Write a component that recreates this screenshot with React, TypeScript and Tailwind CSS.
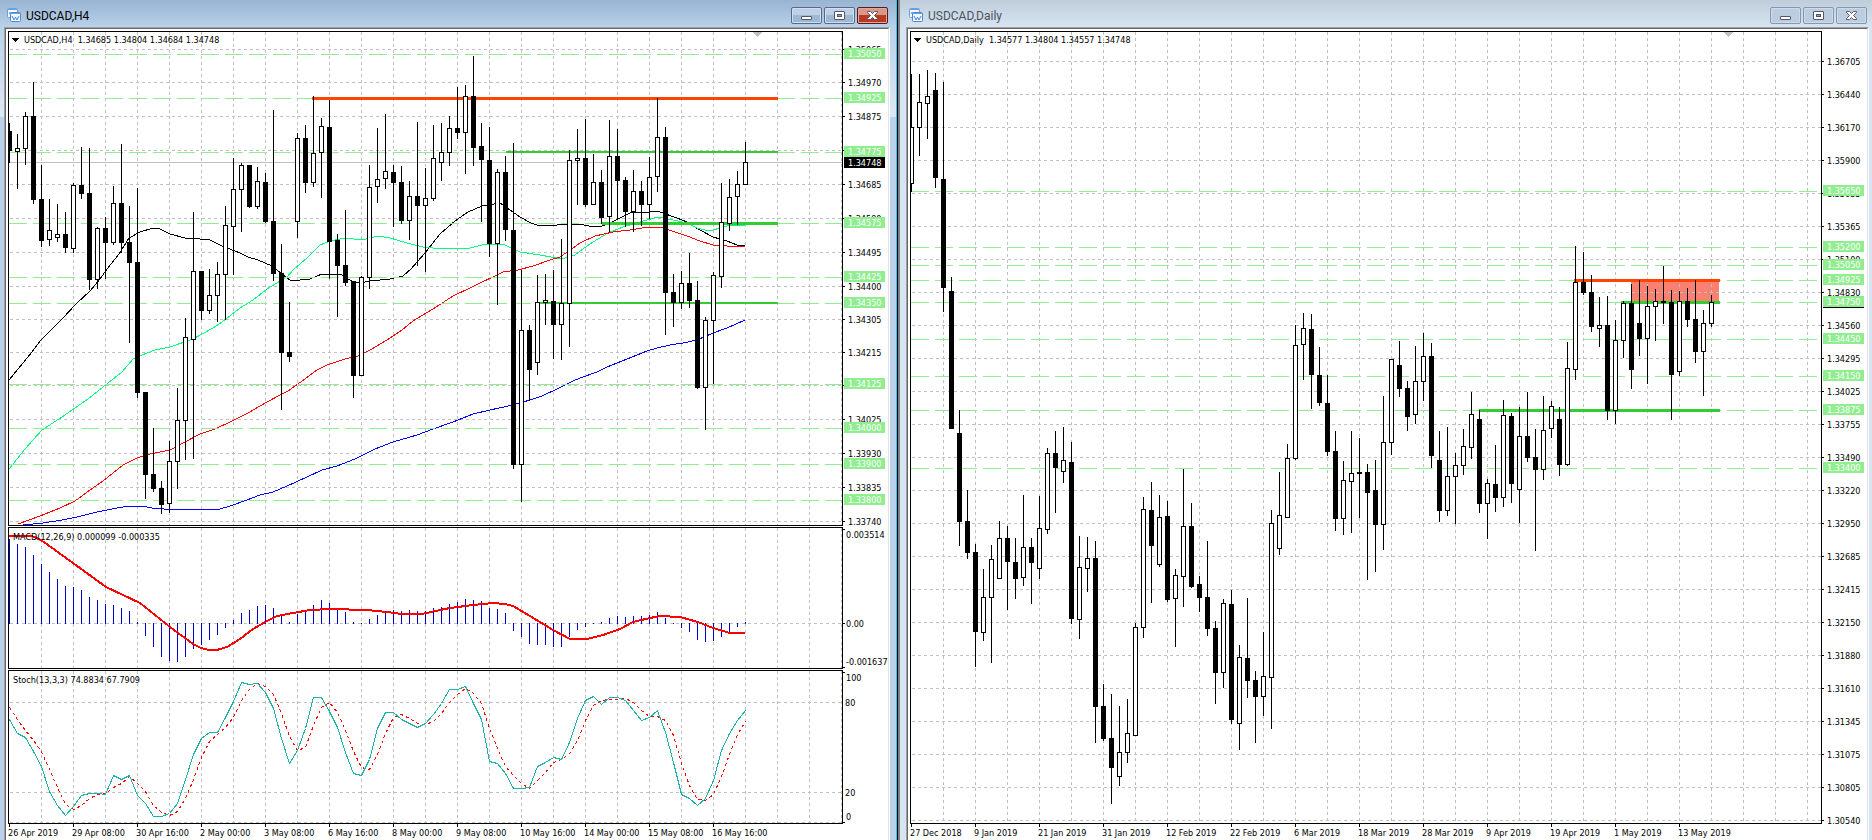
import React from 'react';
import clsx from 'clsx';

// [high, bodyTop, bodyBottom, low, filled]
type Candle = [number, number, number, number, 0 | 1];
type Level = [string, number];

interface TrendLine {
  from: number;
  to: number;
  y: number;
  width: number;
  color: string;
}

const STEP = 8;
const FAR = 4000;
const GRID = '#c0c0c0';
const LEVEL = '#90ee90';
const LIME = '#32cd32';
const FONT = "[font-family:'DejaVu_Sans_Condensed','Noto_Sans',sans-serif]";

const h4Candles: Candle[] = [
  [123, 131, 151, 163, 1], [134, 148, 152, 189, 0], [112, 116, 149, 165, 0], [82, 116, 200, 204, 1],
  [165, 199, 241, 247, 1], [199, 230, 240, 246, 0], [204, 234, 238, 242, 0], [212, 234, 248, 253, 1],
  [183, 185, 249, 253, 0], [147, 185, 194, 199, 1], [148, 193, 280, 290, 1], [227, 228, 280, 289, 0],
  [217, 228, 243, 279, 1], [186, 203, 243, 245, 0], [144, 203, 243, 253, 1], [206, 242, 263, 343, 1],
  [188, 262, 393, 398, 1], [392, 392, 475, 499, 1], [428, 474, 489, 492, 1], [481, 488, 505, 514, 1],
  [441, 461, 504, 513, 0], [388, 420, 462, 489, 0], [318, 337, 421, 460, 0], [212, 271, 340, 459, 0],
  [271, 271, 311, 320, 1], [269, 295, 311, 314, 0], [262, 274, 296, 322, 0], [206, 225, 275, 320, 0],
  [158, 189, 227, 275, 0], [163, 165, 190, 232, 0], [165, 165, 207, 208, 1], [167, 181, 207, 209, 0],
  [173, 182, 222, 223, 1], [110, 221, 274, 281, 1], [244, 273, 353, 410, 1], [302, 352, 357, 362, 1],
  [133, 138, 222, 238, 0], [125, 138, 183, 193, 1], [96, 153, 183, 187, 0], [118, 126, 153, 198, 0],
  [100, 127, 242, 279, 1], [234, 240, 266, 317, 1], [210, 265, 283, 286, 1], [281, 281, 376, 398, 1],
  [276, 277, 376, 376, 0], [165, 187, 278, 289, 0], [128, 179, 187, 203, 0], [114, 171, 179, 189, 0],
  [165, 172, 183, 227, 1], [166, 182, 221, 224, 1], [181, 196, 221, 240, 0], [122, 196, 206, 266, 1],
  [168, 198, 206, 272, 0], [125, 158, 199, 201, 0], [123, 152, 163, 181, 0], [116, 128, 153, 166, 0],
  [87, 128, 133, 139, 1], [85, 96, 133, 174, 0], [56, 96, 148, 166, 1], [123, 146, 160, 222, 1],
  [127, 160, 244, 257, 1], [169, 172, 244, 305, 0], [156, 172, 230, 241, 1], [143, 230, 465, 469, 1],
  [270, 330, 465, 502, 0], [325, 330, 370, 401, 1], [275, 302, 363, 375, 0], [274, 300, 303, 325, 0],
  [270, 301, 325, 359, 1], [239, 303, 325, 360, 0], [150, 160, 304, 347, 0], [129, 158, 161, 205, 0],
  [119, 158, 205, 207, 1], [154, 182, 205, 205, 0], [170, 182, 218, 224, 1], [120, 156, 217, 232, 0],
  [129, 156, 181, 220, 1], [177, 180, 212, 227, 1], [170, 191, 212, 232, 0], [181, 191, 205, 226, 1],
  [157, 177, 205, 219, 0], [98, 137, 177, 192, 0], [127, 137, 293, 335, 1], [274, 292, 303, 327, 1],
  [271, 283, 303, 309, 0], [253, 283, 301, 308, 1], [281, 300, 388, 389, 1], [317, 320, 388, 430, 0],
  [272, 275, 321, 384, 0], [183, 222, 277, 288, 0], [179, 197, 224, 231, 0], [171, 184, 197, 225, 0],
  [142, 162, 185, 185, 0],
];

const dailyCandles: Candle[] = [
  [74, 127, 184, 192, 0], [74, 102, 128, 156, 0], [70, 96, 104, 139, 0], [73, 90, 178, 188, 1],
  [82, 179, 288, 312, 1], [277, 291, 429, 429, 1], [410, 433, 522, 546, 1], [490, 521, 553, 559, 1],
  [544, 552, 632, 667, 1], [569, 597, 633, 641, 0], [545, 559, 598, 663, 0], [521, 538, 579, 579, 0],
  [526, 538, 562, 610, 1], [538, 562, 579, 599, 1], [495, 547, 578, 586, 0], [538, 547, 563, 604, 1],
  [496, 528, 569, 579, 0], [448, 453, 530, 534, 0], [431, 453, 468, 513, 1], [427, 460, 472, 483, 0],
  [442, 462, 619, 624, 1], [536, 567, 620, 639, 0], [537, 558, 569, 592, 0], [541, 558, 707, 743, 1],
  [684, 706, 739, 741, 1], [694, 738, 768, 804, 1], [706, 752, 777, 786, 0], [699, 733, 753, 763, 0],
  [623, 627, 736, 736, 0], [497, 509, 628, 638, 0], [482, 510, 546, 603, 1], [495, 517, 565, 567, 0],
  [501, 516, 600, 602, 1], [569, 575, 599, 647, 0], [469, 526, 577, 607, 0], [503, 526, 587, 588, 1],
  [576, 584, 598, 612, 1], [541, 597, 629, 636, 1], [621, 628, 673, 704, 1], [599, 603, 673, 688, 0],
  [590, 604, 720, 724, 1], [645, 657, 724, 750, 0], [598, 658, 681, 698, 1], [671, 680, 697, 743, 1],
  [632, 676, 697, 716, 0], [510, 523, 678, 729, 0], [472, 515, 549, 555, 0], [444, 458, 518, 518, 0],
  [325, 345, 459, 460, 0], [313, 328, 345, 380, 0], [314, 329, 375, 409, 1], [347, 375, 403, 406, 1],
  [375, 403, 452, 456, 1], [431, 451, 519, 531, 1], [461, 480, 519, 535, 0], [431, 473, 482, 533, 0],
  [438, 472, 474, 518, 1], [464, 472, 493, 580, 1], [460, 490, 525, 572, 1], [396, 442, 525, 550, 0],
  [359, 359, 443, 455, 0], [341, 365, 389, 397, 1], [381, 388, 417, 431, 1], [346, 381, 415, 424, 0],
  [333, 356, 382, 401, 0], [343, 356, 456, 468, 1], [431, 460, 511, 522, 1], [427, 476, 511, 516, 0],
  [453, 465, 477, 524, 0], [429, 446, 466, 475, 0], [392, 414, 448, 459, 0], [410, 419, 504, 513, 1],
  [479, 483, 504, 539, 0], [445, 484, 498, 512, 1], [400, 415, 498, 507, 0], [413, 416, 484, 503, 1],
  [407, 436, 490, 523, 0], [392, 436, 458, 462, 1], [429, 457, 470, 551, 1], [396, 430, 470, 480, 0],
  [401, 406, 429, 438, 0], [407, 419, 465, 476, 1], [342, 368, 465, 466, 0], [246, 282, 370, 380, 0],
  [252, 282, 293, 295, 1], [275, 292, 327, 332, 1], [297, 325, 329, 347, 0], [296, 325, 411, 420, 1],
  [320, 340, 411, 424, 0], [301, 303, 341, 358, 0], [284, 303, 370, 389, 1], [280, 323, 339, 356, 1],
  [286, 306, 339, 384, 0], [289, 301, 307, 341, 0], [266, 301, 303, 324, 1], [290, 302, 375, 420, 1],
  [291, 301, 372, 376, 0], [288, 301, 320, 327, 1], [280, 319, 352, 363, 1], [310, 323, 352, 396, 0],
  [295, 302, 324, 327, 0],
];

const averages = [
  {
    color: '#000000',
    points:
      '9,380 32,352 41,340 62,319 77,303 90,291 100,279 107,269 119,254 129,238 140,232 153,228 160,229 170,234 185,238 200,239 210,240 222,246 240,253 248,257 258,260 272,266 283,275 290,280 300,280 310,279 322,274 342,275 353,282 360,283 370,281 390,279 403,276 411,269 425,253 440,234 455,221 468,212 482,206 500,203 510,210 520,217 531,223 537,225 557,225 573,224 580,224 593,227 602,226 612,222 630,213 650,212 657,211 677,218 687,222 698,229 713,237 727,241 737,245 745,245',
  },
  {
    color: '#00ff7f',
    points:
      '9,469 25,449 42,430 62,417 88,399 103,387 122,372 133,359 142,355 155,350 170,347 193,339 213,328 222,322 240,308 253,300 267,289 287,277 294,269 307,258 320,245 330,241 345,238 362,240 378,236 390,238 407,243 423,247 442,249 470,248 482,245 503,244 520,252 540,255 562,259 575,255 580,251 593,242 608,233 623,227 643,221 658,217 673,220 687,223 697,228 705,230 713,230 727,226 745,225',
  },
  {
    color: '#ff0000',
    points:
      '18,524 40,516 60,508 75,501 90,490 103,481 123,465 137,458 150,454 170,450 185,442 200,434 215,429 230,422 248,413 267,402 280,395 288,391 305,379 317,370 327,365 345,359 358,356 370,350 387,340 402,330 413,321 433,309 453,296 472,287 503,272 518,270 533,266 550,260 560,257 573,248 580,243 595,236 613,232 630,230 648,227 660,227 672,231 687,236 700,241 713,245 727,246 745,247',
  },
  {
    color: '#0000ff',
    points:
      '23,525 43,523 62,520 77,517 97,512 117,508 130,506 142,506 152,508 175,510 200,509 220,509 230,506 247,500 260,495 273,492 287,486 307,477 322,470 337,466 355,459 375,449 393,442 417,435 433,429 453,422 473,414 490,410 513,405 530,400 542,396 557,389 573,381 580,378 597,372 607,367 627,359 647,351 657,348 670,345 683,343 697,340 713,333 727,328 745,320',
  },
];

const macdBars = [
  539, 544, 547, 555, 564, 572, 579, 586, 587, 590, 597, 600, 604, 605, 608, 611, 622, 635, 646, 656,
  660, 661, 656, 648, 644, 639, 634, 627, 620, 613, 610, 606, 605, 608, 615, 622, 614, 611, 605, 600,
  603, 609, 612, 622, 623, 619, 615, 613, 610, 611, 610, 611, 611, 608, 607, 604, 602, 599, 600, 601,
  608, 609, 613, 630, 636, 643, 644, 644, 646, 646, 636, 629, 626, 623, 622, 618, 616, 617, 616, 616,
  615, 612, 618, 623, 627, 631, 639, 641, 640, 636, 632, 626, 622,
];

const macdSignal =
  '9,536 32,536 41,540 73,563 106,587 140,603 170,627 193,644 201,648 209,650 217,650 227,647 240,639 253,629 267,621 277,616 293,613 310,610 330,609 367,610 387,612 402,614 422,614 440,610 450,608 473,605 493,603 505,604 513,606 530,616 553,630 570,639 587,639 603,635 620,629 633,622 650,618 660,616 680,617 698,622 713,628 730,633 745,633';

const stochMain = [
  719, 733, 737, 751, 766, 791, 805, 815, 806, 795, 793, 793, 794, 775, 779, 775, 795, 803, 816, 816,
  813, 803, 779, 754, 738, 732, 732, 717, 701, 682, 684, 683, 692, 708, 738, 763, 750, 728, 697, 697,
  711, 727, 752, 773, 775, 759, 728, 712, 712, 719, 723, 727, 723, 714, 703, 689, 689, 686, 703, 719,
  761, 763, 773, 788, 788, 787, 766, 762, 757, 759, 742, 718, 700, 696, 704, 697, 697, 700, 710, 720,
  717, 710, 732, 762, 794, 798, 805, 798, 780, 750, 733, 720, 710,
];

// %D is a 3-period average of %K
const stochSignal = stochMain.map((v, i) => {
  const prev = stochMain[i - 1] ?? 705;
  const prev2 = stochMain[i - 2] ?? (i === 1 ? 705 : 697);
  return Math.round((v + prev + prev2) / 3);
});

const h4Scale: Level[] = [
  ['1.35065', 49], ['1.34970', 82], ['1.34875', 116], ['1.34780', 150], ['1.34685', 184],
  ['1.34590', 218], ['1.34495', 252], ['1.34400', 286], ['1.34305', 319], ['1.34215', 352],
  ['1.34120', 385], ['1.34025', 419], ['1.33930', 453], ['1.33835', 487], ['1.33740', 521],
];

const h4Levels: Level[] = [
  ['1.35050', 54], ['1.34925', 98], ['1.34775', 152], ['1.34575', 223], ['1.34425', 277],
  ['1.34350', 303], ['1.34125', 384], ['1.34000', 428], ['1.33900', 464], ['1.33800', 500],
];

const dailyScale: Level[] = [
  '1.36705', '1.36440', '1.36170', '1.35900', '1.35635', '1.35365', '1.35100', '1.34830',
  '1.34560', '1.34295', '1.34025', '1.33755', '1.33490', '1.33220', '1.32950', '1.32685',
  '1.32415', '1.32150', '1.31880', '1.31610', '1.31345', '1.31075', '1.30805', '1.30540',
].map((label, i): Level => [label, 61 + i * 33]);

const dailyLevels: Level[] = [
  ['1.35650', 191], ['1.35200', 247], ['1.35050', 265], ['1.34925', 280], ['1.34750', 302],
  ['1.34450', 339], ['1.34150', 376], ['1.33875', 410], ['1.33400', 468],
];

const h4Lines: TrendLine[] = [
  { from: 312, to: 778, y: 97, width: 3, color: '#ff4500' },
  { from: 506, to: 778, y: 151, width: 2, color: LIME },
  { from: 602, to: 778, y: 222, width: 3, color: LIME },
  { from: 538, to: 778, y: 302, width: 2, color: LIME },
];

const dailyLines: TrendLine[] = [
  { from: 1574, to: 1720, y: 279, width: 3, color: '#ff4500' },
  { from: 1621, to: 1720, y: 301, width: 3, color: LIME },
  { from: 1479, to: 1720, y: 409, width: 3, color: LIME },
];

const h4Dates = [
  '26 Apr 2019', '29 Apr 08:00', '30 Apr 16:00', '2 May 00:00', '3 May 08:00', '6 May 16:00',
  '8 May 00:00', '9 May 08:00', '10 May 16:00', '14 May 00:00', '15 May 08:00', '16 May 16:00',
];

const dailyDates = [
  '27 Dec 2018', '9 Jan 2019', '21 Jan 2019', '31 Jan 2019', '12 Feb 2019', '22 Feb 2019',
  '6 Mar 2019', '18 Mar 2019', '28 Mar 2019', '9 Apr 2019', '19 Apr 2019', '1 May 2019', '13 May 2019',
];

const toPoints = (values: number[], left: number) =>
  values.map((y, i) => `${left + i * STEP + 0.5},${y + 0.5}`).join(' ');

const Grid: React.FC<{ left: number; top: number; rows: number[] }> = ({ left, top, rows }) => (
  <g stroke={GRID} strokeDasharray="3 3">
    {Array.from({ length: 40 }, (_, i) => left + 32 + i * 32).map((x) => (
      <line key={x} x1={x + 0.5} x2={x + 0.5} y1={top} y2={FAR} />
    ))}
    {rows.map((y) => (
      <line key={y} x1={left + 1} x2={FAR} y1={y + 0.5} y2={y + 0.5} />
    ))}
  </g>
);

const Levels: React.FC<{ left: number; levels: Level[] }> = ({ left, levels }) => (
  <g stroke={LEVEL} strokeDasharray="18 6">
    {levels.map(([label, y]) => (
      <line key={label} x1={left} x2={FAR} y1={y + 0.5} y2={y + 0.5} />
    ))}
  </g>
);

const Candles: React.FC<{ left: number; data: Candle[] }> = ({ left, data }) => (
  <g>
    {data.map(([high, top, bottom, low, filled], i) => {
      const x = left + i * STEP;
      return (
        <g key={x}>
          <rect x={x} y={high} width={1} height={low - high} />
          <rect x={x - 2} y={top} width={5} height={bottom - top} />
          {!filled && <rect x={x - 1} y={top + 1} width={3} height={bottom - top - 2} fill="#fff" />}
        </g>
      );
    })}
  </g>
);

const TrendLines: React.FC<{ lines: TrendLine[] }> = ({ lines }) => (
  <g>
    {lines.map((l) => (
      <rect key={l.y} x={l.from} y={l.y} width={l.to - l.from} height={l.width} fill={l.color} />
    ))}
  </g>
);

const Header: React.FC<{ x: number; text: string; marker: number }> = ({ x, text, marker }) => (
  <g>
    <path d={`M${x} 38h7l-3 4h-1z`} />
    <text x={x + 12} y={43} className="whitespace-pre">{text}</text>
    <path d={`M${marker} 32h9l-4 5h-1z`} fill={GRID} />
  </g>
);

interface PaneProps {
  className: string;
  left: number;
  top: number;
  label: string;
  axis: React.ReactNode;
  children: React.ReactNode;
}

// A framed plot with its value axis on the right
const Pane: React.FC<PaneProps> = ({ className, left, top, label, axis, children }) => (
  <div className={clsx('flex', className)}>
    <div className="flex min-w-0 flex-1 border border-black">
      <svg role="img" aria-label={label} className="min-w-0 flex-1" shapeRendering="crispEdges">
        <g transform={`translate(${-left} ${-top - 1})`}>{children}</g>
      </svg>
    </div>
    <svg className="w-[45px] shrink-0 overflow-visible" shapeRendering="crispEdges">
      <g transform={`translate(0 ${-top})`}>{axis}</g>
    </svg>
  </div>
);

const PriceAxis: React.FC<{ scale: Level[]; levels: Level[]; bid: number }> = ({ scale, levels, bid }) => (
  <g>
    {scale.map(([label, y]) => (
      <g key={label}>
        <rect x={0} y={y} width={2} height={1} />
        <text x={5} y={y + 4}>{label}</text>
      </g>
    ))}
    <rect x={1} y={bid - 5} width={41} height={11} />
    <text x={5} y={bid + 4} fill="#fff">1.34748</text>
    {levels.map(([label, y]) => (
      <g key={label}>
        <rect x={1} y={y - 6} width={41} height={11} fill={LEVEL} />
        <text x={5} y={y + 3} fill="#fff">{label}</text>
      </g>
    ))}
  </g>
);

const TimeAxis: React.FC<{ dates: string[] }> = ({ dates }) => (
  <svg className="h-4 w-full shrink-0" shapeRendering="crispEdges">
    {dates.map((date, i) => (
      <g key={date}>
        <rect x={1 + i * 64} y={0} width={1} height={3} />
        <text x={i * 64} y={12}>{date}</text>
      </g>
    ))}
  </svg>
);

const ChartIcon: React.FC = () => (
  <svg width="15" height="15" viewBox="0 0 15 15" className="shrink-0" aria-hidden="true">
    <rect x="0.5" y="0.5" width="10" height="9" rx="1" fill="#f4f9ff" stroke="#6aa0e0" />
    <rect x="1" y="1" width="9" height="1" fill="#6aa0e0" />
    <path d="M2 6l1-2 1 2 1-2" fill="none" stroke="#6aa0e0" />
    <rect x="3.5" y="4.5" width="10" height="9" rx="1" fill="#f4f9ff" stroke="#4a86d8" />
    <rect x="4" y="5" width="9" height="1" fill="#6aa0e0" />
    <path d="M5 8l2 4 1.500-3 1.500 3 2-4" fill="none" stroke="#4a86d8" />
  </svg>
);

const glyphs = {
  Minimize: <rect x="10.5" y="9.500" width="10" height="3" rx="0.500" />,
  Maximize: (
    <>
      <rect x="10.5" y="4.500" width="10" height="8" rx="0.500" />
      <rect x="13.5" y="7.500" width="4" height="2" fill="#8ea6c4" />
    </>
  ),
  Close: <path d="M10.500 4.500h3l2 2 2-2h3v1l-3 3 3 3v1h-3l-2-2-2 2h-3v-1l3-3-3-3z" />,
};

const WindowButton: React.FC<{ kind: keyof typeof glyphs; active: boolean }> = ({ kind, active }) => (
  <button
    type="button"
    aria-label={kind}
    className={clsx(
      'h-[17px] w-[31px] rounded-[2px] border',
      !active && 'border-[#8795b3] bg-[#bdcde0] shadow-[inset_0_0_0_1px_#cddbea]',
      active && kind !== 'Close' &&
        'border-[#566b8c] bg-linear-to-b from-[#bdd0e6] from-50% to-[#9db7d5] to-50% shadow-[inset_0_0_0_1px_#d0dff0]',
      active && kind === 'Close' &&
        'border-[#5a1a1a] bg-linear-to-b from-[#d9968a] from-50% to-[#b93a22] to-50% shadow-[inset_0_0_0_1px_#e0a89c]'
    )}
  >
    <svg width="29" height="15" viewBox="1 1 29 15" fill="#fff" stroke="#535666">
      {glyphs[kind]}
    </svg>
  </button>
);

interface ChartWindowProps {
  title: string;
  active: boolean;
  children: React.ReactNode;
}

const ChartWindow: React.FC<ChartWindowProps> = ({ title, active, children }) => (
  <section
    className={clsx(
      'flex min-w-0',
      active
        ? 'border-r border-black bg-[#b9d1ea]'
        : 'border-l-2 border-[#7f7f7f] bg-[#d7e4f2]'
    )}
  >
    <div
      className={clsx(
        'flex min-w-0 flex-1 flex-col',
        active
          ? 'border-r border-[#33c3ee] bg-[linear-gradient(#99b4d1_0px,#b9d1ea_27px,#dce8f5_117px,#b9d1ea_117px)] pr-1.5 pl-1'
          : 'bg-[linear-gradient(#bfcddb_0px,#d7e4f2_27px)] pr-[3px] pl-1.5'
      )}
    >
      <header className="flex h-[27px] shrink-0 items-center gap-1 pr-0.5 pl-[3px]">
        <span className="pt-1">
          <ChartIcon />
        </span>
        <h1
          className={clsx(
            'flex-1 pt-1 text-xs [font-family:Roboto,sans-serif]',
            active ? 'text-black' : 'text-[#4c535c]'
          )}
        >
          {title}
        </h1>
        <div className="flex gap-0.5 pt-1">
          <WindowButton kind="Minimize" active={active} />
          <WindowButton kind="Maximize" active={active} />
          <WindowButton kind="Close" active={active} />
        </div>
      </header>
      <div className="flex flex-1 flex-col border-t border-r border-l border-t-[#a0a0a0] border-r-white border-l-[#a0a0a0]">
        <div
          className={clsx(
            'flex flex-1 flex-col gap-px border-t border-r border-l border-t-[#696969] border-r-[#e3e3e3] border-l-[#696969] bg-white pt-0.5 pl-0.5 text-[9px]',
            FONT
          )}
        >
          {children}
        </div>
      </div>
    </div>
  </section>
);

const H4Window: React.FC = () => (
  <ChartWindow title="USDCAD,H4" active>
    <Pane
      className="min-h-80 flex-1"
      left={9}
      top={31}
      label="USDCAD four hour price"
      axis={<PriceAxis scale={h4Scale} levels={h4Levels} bid={162} />}
    >
      <Grid left={9} top={32} rows={h4Scale.map(([, y]) => y)} />
      <rect x={9} y={162} width={FAR} height={1} fill={GRID} />
      {averages.map((ma) => (
        <polyline key={ma.color} points={ma.points} fill="none" stroke={ma.color} />
      ))}
      <Levels left={9} levels={h4Levels} />
      <TrendLines lines={h4Lines} />
      <Candles left={9} data={h4Candles} />
      <Header x={12} text="USDCAD,H4  1.34685 1.34804 1.34684 1.34748" marker={753} />
    </Pane>
    <Pane
      className="h-[142px] shrink-0"
      left={9}
      top={527}
      label="MACD"
      axis={
        <>
          <rect x={0} y={529} width={2} height={1} />
          <text x={3} y={538}>0.003514</text>
          <rect x={0} y={623} width={2} height={1} />
          <text x={3} y={627}>0.00</text>
          <text x={3} y={665}>-0.001637</text>
          <rect x={0} y={667} width={2} height={1} />
        </>
      }
    >
      <Grid left={9} top={528} rows={[623]} />
      {macdBars.map((y, i) => (
        <rect
          key={i}
          x={9 + i * STEP}
          y={Math.min(y, 623)}
          width={1}
          height={Math.abs(y - 623) + 1}
          fill="#0000cd"
        />
      ))}
      <polyline points={macdSignal} fill="none" stroke="#ff0000" strokeWidth={2} />
      <text x={13} y={540}>MACD(12,26,9) 0.000099 -0.000335</text>
    </Pane>
    <div className="flex shrink-0 flex-col">
      <Pane
        className="h-[154px]"
        left={9}
        top={670}
        label="Stochastic"
        axis={
          <>
            <rect x={0} y={672} width={2} height={1} />
            <text x={3} y={681}>100</text>
            <text x={2} y={706}>80</text>
            <text x={2} y={796}>20</text>
            <text x={3} y={820}>0</text>
            <rect x={0} y={822} width={2} height={1} />
          </>
        }
      >
        <Grid left={9} top={671} rows={[702, 792, 822]} />
        <polyline points={toPoints(stochSignal, 9)} fill="none" stroke="#ff0000" strokeDasharray="3 3" />
        <polyline points={toPoints(stochMain, 9)} fill="none" stroke="#20b2aa" />
        <text x={13} y={683}>Stoch(13,3,3) 74.8834 67.7909</text>
      </Pane>
      <TimeAxis dates={h4Dates} />
    </div>
  </ChartWindow>
);

const DailyWindow: React.FC = () => (
  <ChartWindow title="USDCAD,Daily" active={false}>
    <div className="flex flex-1 flex-col">
      <Pane
        className="min-h-80 flex-1"
        left={911}
        top={31}
        label="USDCAD daily price"
        axis={<PriceAxis scale={dailyScale} levels={dailyLevels} bid={302} />}
      >
        <rect x={1631} y={281} width={88} height={21} fill="#fa8072" />
        <Grid left={911} top={32} rows={dailyScale.map(([, y]) => y)} />
        <Levels left={911} levels={dailyLevels} />
        <TrendLines lines={dailyLines} />
        <Candles left={911} data={dailyCandles} />
        <Header x={914} text="USDCAD,Daily  1.34577 1.34804 1.34557 1.34748" marker={1724} />
      </Pane>
      <TimeAxis dates={dailyDates} />
    </div>
  </ChartWindow>
);

const App: React.FC = () => (
  <main className="grid min-h-screen grid-cols-[449fr_487fr] overflow-hidden">
    <H4Window />
    <DailyWindow />
  </main>
);

export default App;
